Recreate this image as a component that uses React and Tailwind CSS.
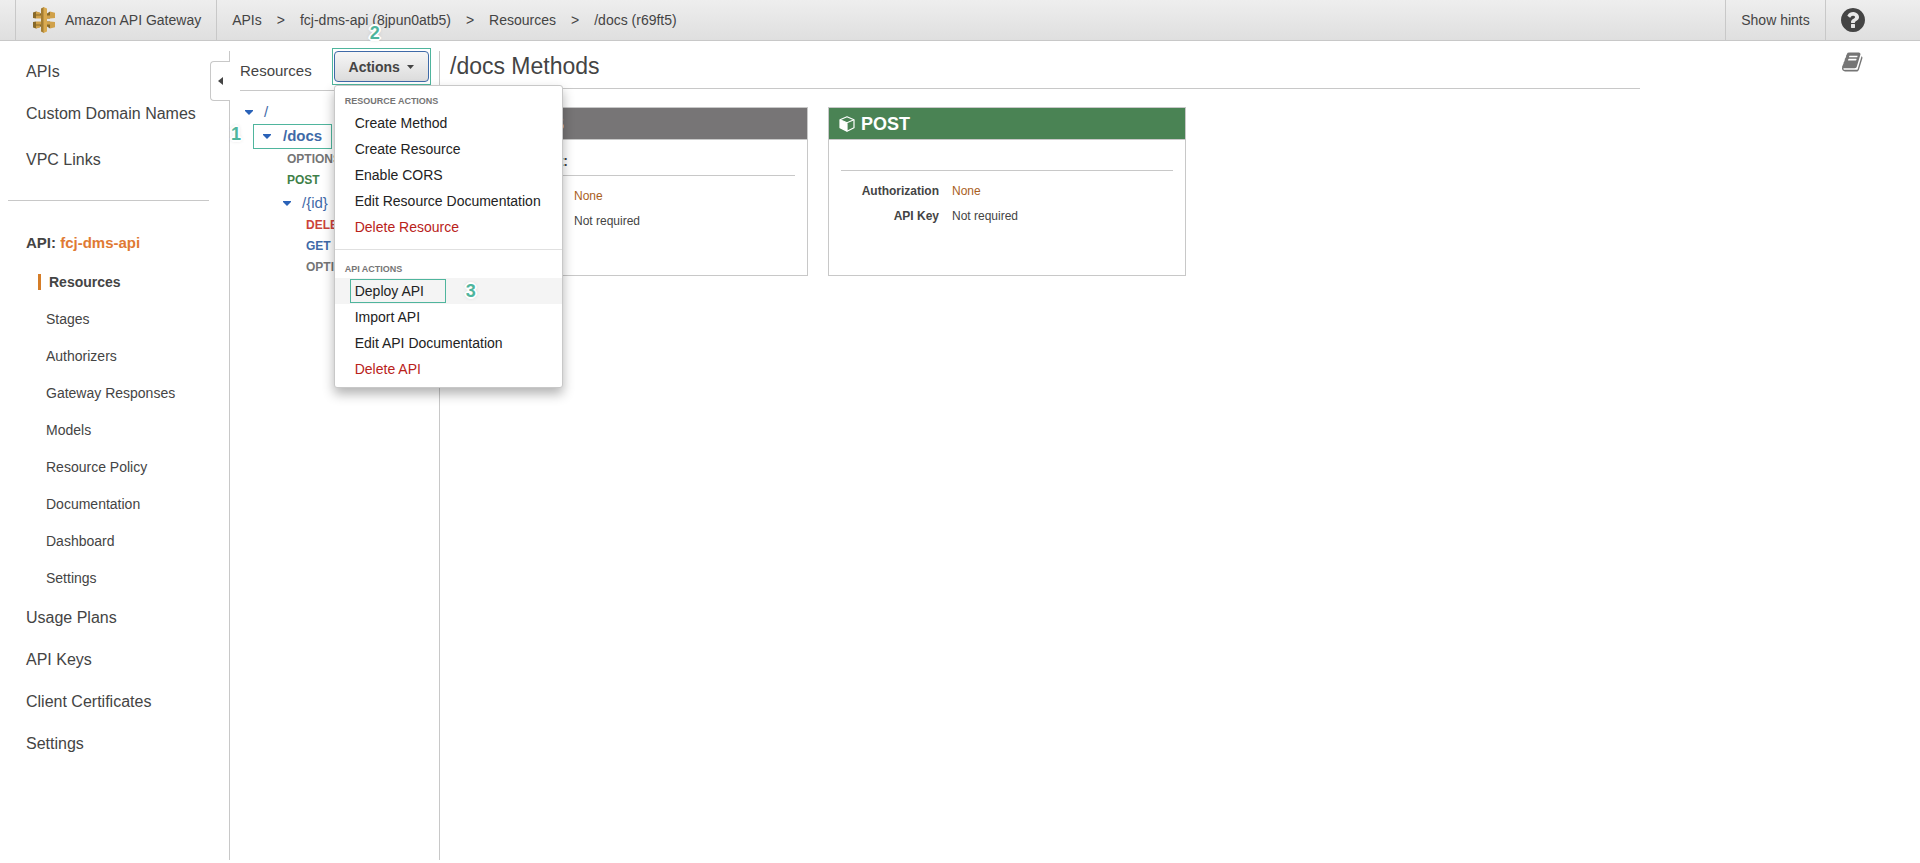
import { useState } from 'react'

const crumbs = ['APIs', 'fcj-dms-api (8jpun0atb5)', 'Resources', '/docs (r69ft5)']

const apiLinks = [
  'Stages',
  'Authorizers',
  'Gateway Responses',
  'Models',
  'Resource Policy',
  'Documentation',
  'Dashboard',
  'Settings',
]

const bottomLinks = ['Usage Plans', 'API Keys', 'Client Certificates', 'Settings']

const resourceActions = ['Create Method', 'Create Resource', 'Enable CORS', 'Edit Resource Documentation', 'Delete Resource']
const apiActions = ['Deploy API', 'Import API', 'Edit API Documentation', 'Delete API']

function GatewayLogo() {
  return (
    <svg className="h-[26px] w-[22px] shrink-0" viewBox="0 0 22 26" aria-hidden="true">
      <path fill="#876929" d="M0 5.500l3-1 5 2v2.500H3v2.500L0 11zM14 6.500l3-2v7h-3zM0 20.500l3 1 5-2V17H3v-2.500L0 15zM14 19.500l3 2v-7h-3z" />
      <path fill="#d0a14a" d="M3 4.500l4 1v2H3zM3 8.500h5v3H3zM14 8.500h3v3h-3zM17 4.500l5 1.200V11l-5 .5z" />
      <path fill="#d0a14a" d="M3 21.500l4-1v-2H3zM3 17.500h5v-3H3zM14 17.500h3v-3h-3zM17 21.500l5-1.200V15l-5-.5z" />
      <path fill="#a37d33" d="M8 1.500L11 0v26l-3-1.500z" />
      <path fill="#d9aa50" d="M14 1.500L10.500 0v26l3.500-1.500z" />
    </svg>
  )
}

function HelpIcon() {
  return (
    <svg className="size-7" viewBox="0 0 1792 1792" fill="currentColor" aria-hidden="true">
      <path d="M1024 1376v-192q0-14-9-23t-23-9H800q-14 0-23 9t-9 23v192q0 14 9 23t23 9h192q14 0 23-9t9-23zm256-672q0-88-55.500-163t-138.500-116-170-41q-243 0-371 213-15 24 8 42l132 100q7 6 19 6 16 0 25-12 53-68 86-92 34-24 86-24 48 0 85.500 26t37.500 59q0 38-20 61t-68 45q-63 28-115.500 86.500T768 1020v36q0 14 9 23t23 9h192q14 0 23-9t9-23q0-19 21.500-49.500t54.500-49.500q32-18 49-28.500t46-35 44.500-48 28-60.500 12.500-81zm384 192q0 209-103 385.500t-279.500 279.500-385.500 103-385.500-103-279.500-279.500-103-385.500 103-385.500 279.500-279.500 385.500-103 385.500 103 279.500 279.500 103 385.500z" />
    </svg>
  )
}

function BookIcon() {
  return (
    <svg className="size-[22px]" viewBox="0 0 1792 1792" fill="currentColor" aria-hidden="true">
      <path d="M1639 478q40 57 18 129l-275 906q-19 64-76.500 107.500T1183 1664H260q-77 0-148.500-53.500T12 1479q-24-67-2-127 0-4 3-27t4-37q1-8-3-21.500t-3-19.500q2-11 8-21t16.500-23.500T52 1179q23-38 45-91.500t30-91.500q3-10 .5-30t-.5-28q3-11 17-28t17-23q21-36 42-92t25-90q1-9-2.500-32t.5-28q4-13 22-30.500t22-22.500q19-26 42.500-84.500T340 411q1-8-3-25.500t-2-26.500q2-8 9-18t18-23 17-21q8-12 16.500-30.500t15-35 16-36 19.500-32T469.500 140t36-11.500T553 134l-1 3q38-9 51-9h761q74 0 114 56t18 130l-274 906q-36 119-71.500 153.500T1022 1408H153q-27 0-38 15-11 16-1 43 24 70 144 70h923q29 0 56-15.500t35-41.500l300-987q7-22 5-57 38 15 59 43zm-1064 2q-4 13 2 22.500t20 9.500h608q13 0 25.500-9.500T1247 480l21-64q4-13-2-22.500t-20-9.500H638q-13 0-25.500 9.500T596 416zm-83 256q-4 13 2 22.500t20 9.500h608q13 0 25.500-9.500t16.500-22.500l21-64q4-13-2-22.500t-20-9.500H555q-13 0-25.500 9.500T513 672z" />
    </svg>
  )
}

function CubeIcon() {
  return (
    <svg className="size-4 shrink-0" viewBox="0 0 16 16" aria-hidden="true">
      <path d="M8 .8l7 2.900v8L8 15.200 1 11.700v-8z" fill="none" stroke="#fff" strokeWidth="1.200" strokeLinejoin="round" />
      <path d="M1 3.700l7 3v8.500l-7-3.500z" fill="#fff" />
      <path d="M1 3.700l7 3 7-3M8 6.700v8.500" fill="none" stroke="#fff" strokeWidth="1.200" />
    </svg>
  )
}

function Caret() {
  return (
    <svg className="h-[5px] w-2 shrink-0" viewBox="0 0 8 5" fill="#2a62b8" aria-hidden="true">
      <path d="M0 0h8v1L4 5 0 1z" />
    </svg>
  )
}

// numbered step marker drawn over the console
function Step({ n, className }) {
  return (
    <span
      className={`absolute z-30 text-lg leading-5 font-bold text-[#4fb59d] [text-shadow:2px_0_white,-2px_0_white,0_2px_white,0_-2px_white,1px_1px_white,-1px_1px_white,1px_-1px_white,-1px_-1px_white,0_0_4px_rgba(0,0,0,0.3)] ${className}`}
    >
      {n}
    </span>
  )
}

function MenuGroup({ title, items, active }) {
  return (
    <div>
      <div className="px-[10px] text-[9px] leading-[17px] font-bold text-[#757575] uppercase">{title}</div>
      {items.map(item => (
        <div key={item} className={`relative flex h-[26px] items-center ${item === active ? 'bg-[#f4f4f4]' : ''}`}>
          <button
            role="menuitem"
            className={`w-full px-5 text-left text-sm ${item.startsWith('Delete') ? 'text-[#b9221a]' : 'text-[#222]'}`}
          >
            {item}
          </button>
          {item === active && (
            <>
              <span className="absolute inset-y-px left-[15px] w-24 border border-[#4fb59d]" />
              <Step n="3" className="left-[131px]" />
            </>
          )}
        </div>
      ))}
    </div>
  )
}

function MethodCard({ method, color, endpoint }) {
  return (
    <section className="flex h-[169px] w-[358px] flex-col border border-[#c8c8c8]">
      <h2 className={`flex h-8 shrink-0 items-center gap-[6px] border-b border-[#c8c8c8] px-[10px] text-lg font-bold text-white ${color}`}>
        <CubeIcon />
        {method}
      </h2>
      <div className={`mx-3 flex items-end border-b border-[#c8c8c8] pb-1 text-sm font-bold ${endpoint ? 'h-9' : 'h-[31px]'}`}>
        {endpoint}
      </div>
      <dl className="mx-3 mt-2 grid grid-cols-[98px_1fr] gap-x-[13px] text-xs leading-[25px]">
        <dt className="text-right font-bold">Authorization</dt>
        <dd className="text-[#a9601c]">None</dd>
        <dt className="text-right font-bold">API Key</dt>
        <dd>Not required</dd>
      </dl>
    </section>
  )
}

export default function App() {
  const [menuOpen, setMenuOpen] = useState(true)

  return (
    <div className="flex min-h-screen flex-col bg-white pb-[3px] font-['Liberation_Sans',Arial,sans-serif] text-[#444]">
      <header className="flex h-[41px] items-stretch border-b border-[#c8c8c8] bg-linear-to-b from-[#eee] to-[#dfdfdf] pl-[15px] text-sm">
        <div className="flex items-center gap-[10px] border-x border-[#c8c8c8] pr-[15px] pl-[17px]">
          <GatewayLogo />
          <span>Amazon API Gateway</span>
        </div>
        <nav className="flex flex-1 items-center gap-[15px] pl-[15px]">
          {crumbs.map((crumb, i) => (
            <span key={crumb} className="flex items-center gap-[15px]">
              {i > 0 && <span>&gt;</span>}
              <a href="#">{crumb}</a>
            </span>
          ))}
        </nav>
        <button className="w-[101px] border-x border-[#c8c8c8]">Show hints</button>
        <button aria-label="Help" className="mr-[53px] ml-[13px]">
          <HelpIcon />
        </button>
      </header>

      <div className="flex flex-1 pt-[10px]">
        <aside className="relative w-[230px] shrink-0 border-r border-[#c8c8c8]">
          <button
            aria-label="Collapse navigation"
            className="absolute top-[10px] -right-px flex h-10 w-5 items-center justify-center rounded-l-[4px] border border-r-0 border-[#c8c8c8] bg-white"
          >
            <svg className="h-2 w-[5px]" viewBox="0 0 5 8" fill="#444" aria-hidden="true">
              <path d="M5 0v8L0 4z" />
            </svg>
          </button>
          <nav className="flex flex-col">
            <div className="flex flex-col pl-[26px] text-base">
              <a href="#" className="flex h-[42px] items-center">APIs</a>
              <a href="#" className="flex h-[42px] items-center">Custom Domain Names</a>
              <a href="#" className="mt-1 flex h-[42px] items-center">VPC Links</a>
            </div>
            <hr className="mt-[19px] mr-5 ml-2 border-[#c8c8c8]" />
            <div className="mt-8 pl-[26px] text-[15px] leading-5 font-bold">
              API: <a href="#" className="text-[#e07a33]">fcj-dms-api</a>
            </div>
            <a href="#" className="mt-[21px] mb-[10px] ml-[38px] border-l-[3px] border-[#d57d28] pl-2 text-sm leading-4 font-bold">
              Resources
            </a>
            {apiLinks.map(link => (
              <a key={link} href="#" className="flex h-[37px] items-center pl-[46px] text-sm">{link}</a>
            ))}
            <div className="mt-px flex flex-col pl-[26px] text-base">
              {bottomLinks.map(link => (
                <a key={link} href="#" className="flex h-[42px] items-center">{link}</a>
              ))}
            </div>
          </nav>
        </aside>

        <section className="relative w-[210px] shrink-0 border-r border-[#c8c8c8] pl-[10px]">
          <Step n="1" className="top-[73px] left-px" />
          <div className="flex h-10 items-start border-b border-[#c8c8c8]">
            <h2 className="mt-[10px] text-[15px] leading-5">Resources</h2>
            <div className="relative ml-[22px]">
              <button
                onClick={() => setMenuOpen(!menuOpen)}
                className="flex h-[31px] w-[95px] items-center justify-center gap-[7px] rounded-[4px] border border-[#3f6aa8] bg-linear-to-b from-[#f6f6f6] to-[#dcdcdc] text-sm font-bold"
              >
                Actions
                <svg className="h-1 w-[7px]" viewBox="0 0 7 4" fill="#444" aria-hidden="true">
                  <path d="M0 0h7L3.500 4z" />
                </svg>
              </button>
              <span className="pointer-events-none absolute -inset-x-[2px] -inset-y-[3px] border border-[#4fb59d]" />
              <Step n="2" className="-top-7 left-9" />
              {menuOpen && (
                <div
                  role="menu"
                  className="absolute top-[34px] left-0 z-20 w-[229px] rounded-[3px] border border-[#c8c8c8] bg-white pt-[7px] pb-[5px] shadow-[0_6px_12px_rgba(0,0,0,0.3)]"
                >
                  <MenuGroup title="Resource actions" items={resourceActions} />
                  <hr className="mt-[9px] mb-[11px] border-[#e0e0e0]" />
                  <MenuGroup title="API actions" items={apiActions} active="Deploy API" />
                </div>
              )}
            </div>
          </div>

          <div className="pt-[9px] text-[15px] text-[#3f6aa8]">
            <a href="#" className="flex h-6 items-center gap-[11px] pl-[5px]"><Caret />/</a>
            <a href="#" className="ml-[13px] flex h-[25px] w-[79px] items-center gap-[12px] border border-[#4fb59d] pl-[9px] font-bold">
              <Caret />/docs
            </a>
            <div className="flex flex-col pl-[47px] text-xs leading-[21px] font-bold">
              <a href="#" className="text-[#757575]">OPTIONS</a>
              <a href="#" className="text-[#3f8048]">POST</a>
            </div>
            <a href="#" className="flex h-6 items-center gap-[11px] pl-[43px]"><Caret />/{'{id}'}</a>
            <div className="flex flex-col pl-[66px] text-xs leading-[21px] font-bold">
              <a href="#" className="text-[#cb423b]">DELETE</a>
              <a href="#">GET</a>
              <a href="#" className="text-[#757575]">OPTIONS</a>
            </div>
          </div>
        </section>

        <main className="flex flex-1 items-start pl-[10px]">
          <div className="flex-1">
            <h1 className="h-[38px] border-b border-[#c8c8c8] text-[23px] leading-[30px]">/docs Methods</h1>
            <div className="mt-[18px] flex flex-wrap gap-5">
              <MethodCard method="OPTIONS" color="bg-[#777576]" endpoint="Mock Endpoint:" />
              <MethodCard method="POST" color="bg-[#4a8354]" />
            </div>
          </div>
          <button aria-label="Documentation" className="mr-14 ml-[202px] text-[#757575]">
            <BookIcon />
          </button>
        </main>
      </div>
    </div>
  )
}
